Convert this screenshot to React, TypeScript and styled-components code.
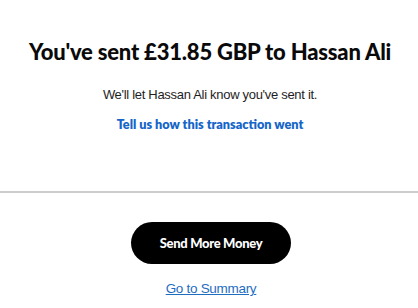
import React from "react";
import styled, { createGlobalStyle } from "styled-components";

const Global = createGlobalStyle`
  html, body { margin: 0; padding: 0; background: #ffffff; }
  body { font-family: "Liberation Sans", Arial, sans-serif; }
`;

const Page = styled.div`
  width: 418px;
  height: 308px;
  display: flex;
  flex-direction: column;
  background: #fff;
  overflow: hidden;
`;

const Top = styled.section`
  display: flex;
  flex-direction: column;
  align-items: center;
  padding-top: 37px;
  padding-left: 2px;
  height: 157px;
  box-sizing: border-box;
`;

const Heading = styled.h1`
  margin: 0;
  font-family: Lato, "Noto Sans", sans-serif;
  font-weight: 900;
  font-size: 22px;
  line-height: 30px;
  color: #0a0a0a;
  letter-spacing: -0.2px;
`;

const Note = styled.p`
  margin: 20px 0 0;
  font-size: 13px;
  line-height: 16px;
  color: #1e1e1e;
  letter-spacing: -0.3px;
`;

const FeedbackLink = styled.a`
  margin-top: 13px;
  font-family: Lato, "Noto Sans", sans-serif;
  font-weight: 800;
  font-size: 12.7px;
  line-height: 16px;
  color: #1565c8;
  text-decoration: none;
`;

const Divider = styled.hr`
  margin: 0;
  border: none;
  border-top: 2px solid #cccccc;
  width: 100%;
  margin-top: 34px;
`;

const Bottom = styled.section`
  display: flex;
  flex-direction: column;
  align-items: center;
  padding-top: 29px;
  padding-left: 4px;
`;

const PrimaryButton = styled.button`
  width: 160px;
  height: 42px;
  border: none;
  border-radius: 21px;
  background: #000;
  color: #fff;
  font-family: Lato, "Noto Sans", sans-serif;
  font-weight: 900;
  font-size: 13px;
  letter-spacing: -0.3px;
  cursor: pointer;
`;

const SummaryLink = styled.a`
  margin-top: 17px;
  font-size: 13.5px;
  line-height: 16px;
  color: #1f6dbf;
  text-decoration: underline;
  letter-spacing: -0.3px;
`;

export default function App() {
  return (
    <Page>
      <Global />
      <Top>
        <Heading>You've sent £31.85 GBP to Hassan Ali</Heading>
        <Note>We'll let Hassan Ali know you've sent it.</Note>
        <FeedbackLink href="#">Tell us how this transaction went</FeedbackLink>
      </Top>
      <Divider />
      <Bottom>
        <PrimaryButton>Send More Money</PrimaryButton>
        <SummaryLink href="#">Go to Summary</SummaryLink>
      </Bottom>
    </Page>
  );
}
